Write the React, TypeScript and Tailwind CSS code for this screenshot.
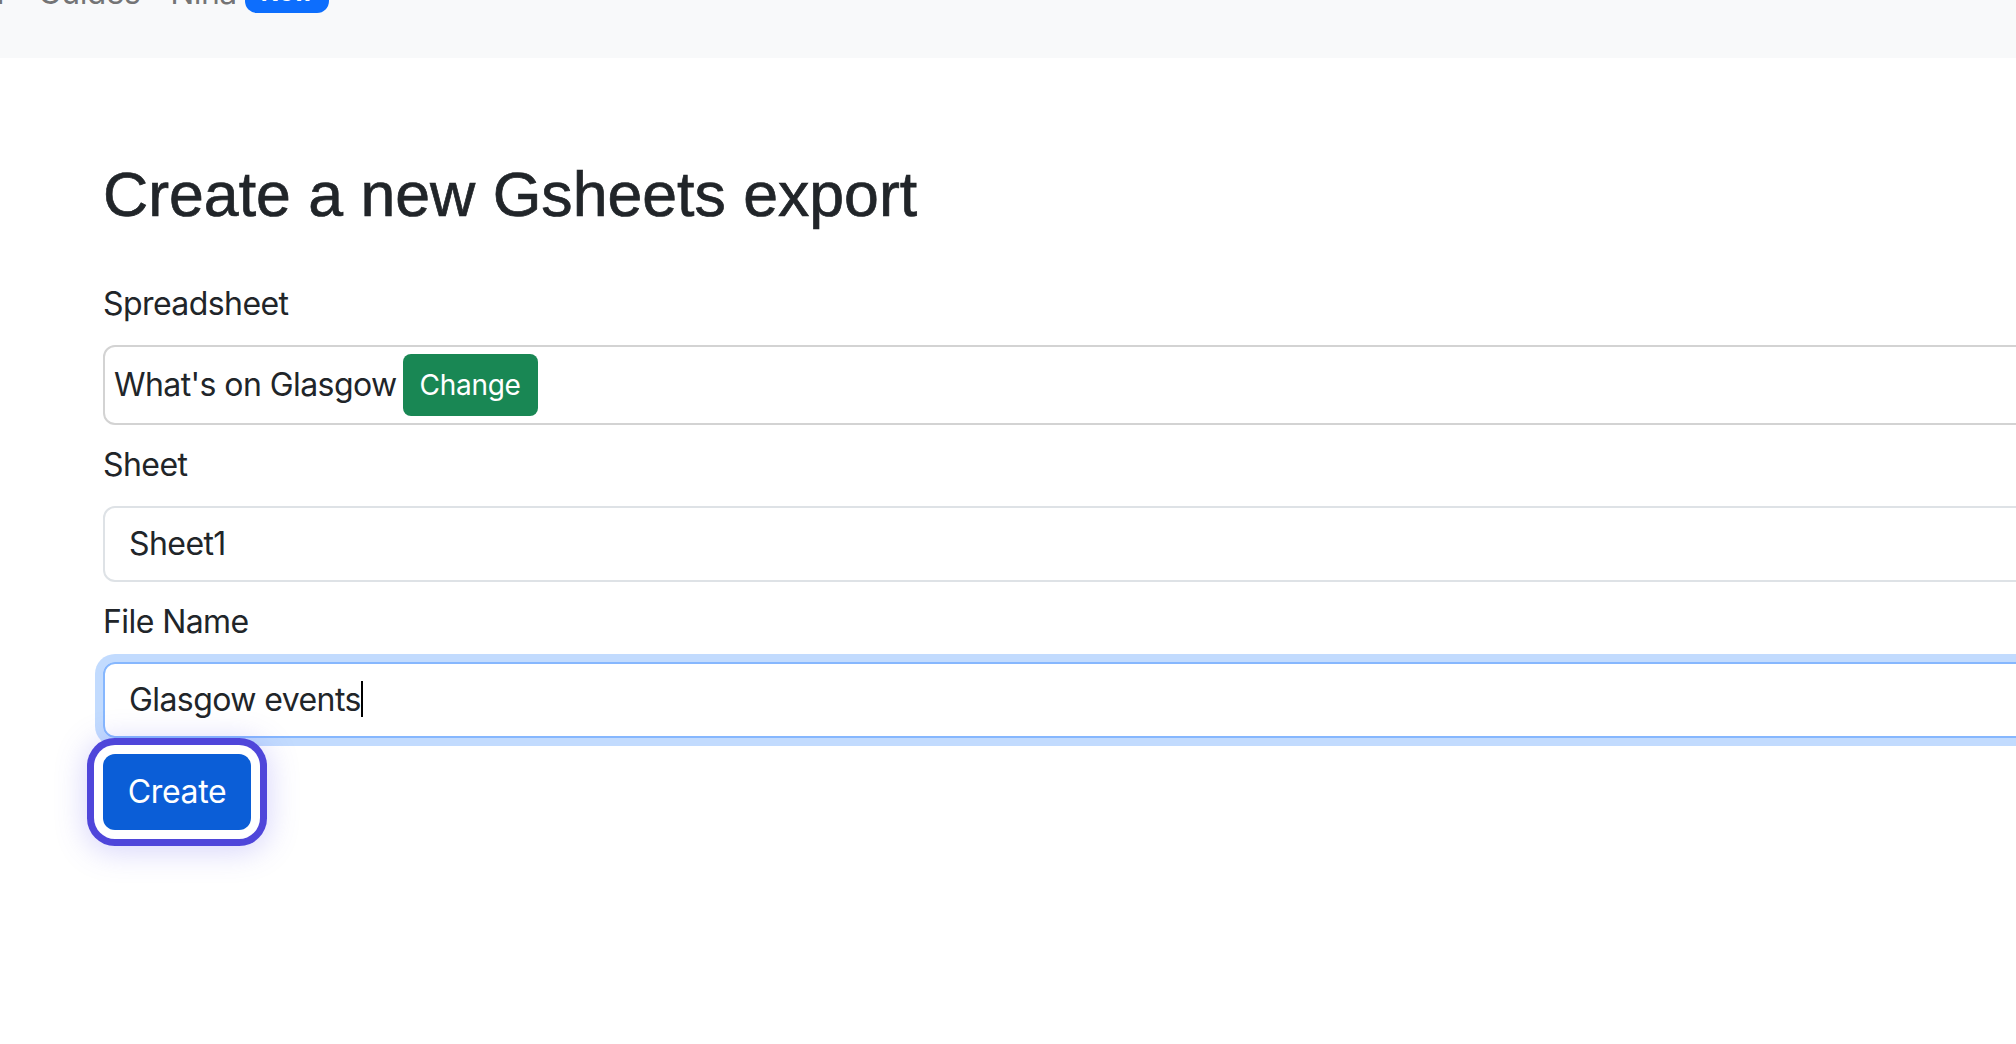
import React from 'react';

const navItems = ['Guides', 'Nina'];

function NavBar() {
  return (
    <div className="h-[58px] w-full overflow-hidden bg-[#f8f9fa]">
      <div className="-mt-[31px] flex h-[48px] items-center text-[32px] leading-[48px] text-[rgba(0,0,0,0.55)]">
        <div className="flex w-[4px] shrink-0 justify-end">
          <span className="whitespace-nowrap">Tutorial</span>
        </div>
        <span className="ml-[34px] whitespace-nowrap">{navItems[0]}</span>
        <span className="ml-[30px] whitespace-nowrap">{navItems[1]}</span>
        <span className="ml-[8px] rounded-[12px] bg-[#0d6efd] px-[16px] py-[8px] text-[24px] font-bold leading-[24px] tracking-normal text-white">
          New
        </span>
      </div>
    </div>
  );
}

export default function App() {
  return (
    <div className="h-[1044px] w-[2016px] overflow-hidden bg-white font-['Inter',sans-serif] tracking-[-0.036em] text-[#212529]">
      <NavBar />

      <div className="pl-[103px] pt-[99px]">
        <h1 className="mb-[47px] font-['Liberation_Sans',Arial,sans-serif] text-[62.6px] font-medium leading-[75.6px] tracking-normal [-webkit-text-stroke:0.7px_currentColor]">
          Create a new Gsheets export
        </h1>

        <label className="mb-[17px] block text-[32px] leading-[48px]">Spreadsheet</label>
        <div className="mb-[16px] flex h-[80px] w-[2100px] items-center gap-[6px] rounded-[12px] border-2 border-[#d3d3d3] px-[9px] py-[7px] text-[32px]">
          <span className="whitespace-nowrap">What's on Glasgow</span>
          <button className="h-[62px] w-[135px] rounded-[8px] bg-[#198754] text-[28px] leading-[42px] tracking-[-0.01em] text-white">
            Change
          </button>
        </div>

        <label className="mb-[17px] block text-[32px] leading-[48px]">Sheet</label>
        <div className="mb-[16px] h-[76px] w-[2100px] rounded-[12px] border-2 border-[#dee2e6] px-[24px] py-[12px] text-[32px] leading-[48px]">
          Sheet1
        </div>

        <label className="mb-[16px] block text-[32px] leading-[48px]">File Name</label>
        <div className="mb-[16px] h-[76px] w-[2100px] rounded-[12px] border-2 border-[#86b7fe] px-[24px] py-[12px] text-[32px] leading-[48px] shadow-[0_0_0_8px_rgba(13,110,253,0.25)]">
          <span>Glasgow events</span>
          <span className="inline-block h-[36px] w-[2px] bg-black align-[-6px]" />
        </div>

        <button className="h-[76px] w-[148px] rounded-[12px] bg-[#0b5ed7] text-[32px] leading-[48px] tracking-[-0.01em] text-white ring-[7px] ring-[#4f46da] ring-offset-[9px] ring-offset-white shadow-[0_4px_30px_18px_rgba(99,90,240,0.25)]">
          Create
        </button>
      </div>
    </div>
  );
}
